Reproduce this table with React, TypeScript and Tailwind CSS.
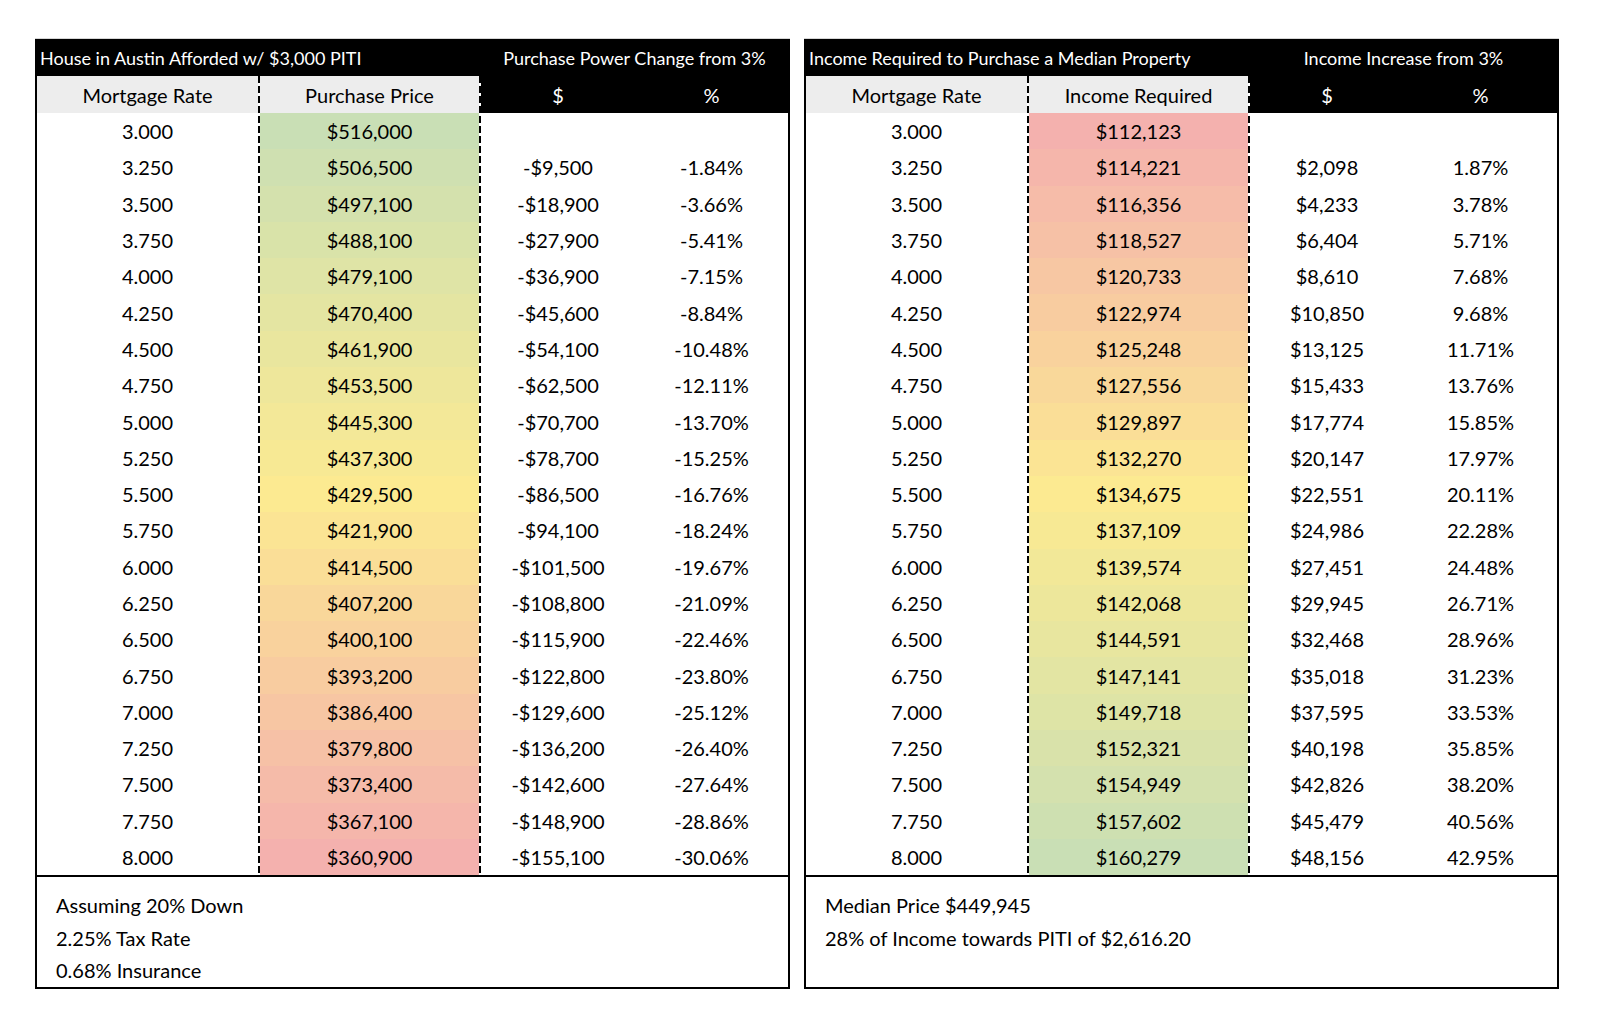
import React from "react";

type Row = [string, string, string];

interface PanelProps {
    title: string;
    subtitle: string;
    valueHeader: string;
    rows: Row[];
    notes: string[];
}

const RATES = [
    "3.000", "3.250", "3.500", "3.750", "4.000", "4.250", "4.500", "4.750", "5.000", "5.250", "5.500",
    "5.750", "6.000", "6.250", "6.500", "6.750", "7.000", "7.250", "7.500", "7.750", "8.000",
];

const purchase: Row[] = [
    ["$516,000", "", ""],
    ["$506,500", "-$9,500", "-1.84%"],
    ["$497,100", "-$18,900", "-3.66%"],
    ["$488,100", "-$27,900", "-5.41%"],
    ["$479,100", "-$36,900", "-7.15%"],
    ["$470,400", "-$45,600", "-8.84%"],
    ["$461,900", "-$54,100", "-10.48%"],
    ["$453,500", "-$62,500", "-12.11%"],
    ["$445,300", "-$70,700", "-13.70%"],
    ["$437,300", "-$78,700", "-15.25%"],
    ["$429,500", "-$86,500", "-16.76%"],
    ["$421,900", "-$94,100", "-18.24%"],
    ["$414,500", "-$101,500", "-19.67%"],
    ["$407,200", "-$108,800", "-21.09%"],
    ["$400,100", "-$115,900", "-22.46%"],
    ["$393,200", "-$122,800", "-23.80%"],
    ["$386,400", "-$129,600", "-25.12%"],
    ["$379,800", "-$136,200", "-26.40%"],
    ["$373,400", "-$142,600", "-27.64%"],
    ["$367,100", "-$148,900", "-28.86%"],
    ["$360,900", "-$155,100", "-30.06%"],
];

const income: Row[] = [
    ["$112,123", "", ""],
    ["$114,221", "$2,098", "1.87%"],
    ["$116,356", "$4,233", "3.78%"],
    ["$118,527", "$6,404", "5.71%"],
    ["$120,733", "$8,610", "7.68%"],
    ["$122,974", "$10,850", "9.68%"],
    ["$125,248", "$13,125", "11.71%"],
    ["$127,556", "$15,433", "13.76%"],
    ["$129,897", "$17,774", "15.85%"],
    ["$132,270", "$20,147", "17.97%"],
    ["$134,675", "$22,551", "20.11%"],
    ["$137,109", "$24,986", "22.28%"],
    ["$139,574", "$27,451", "24.48%"],
    ["$142,068", "$29,945", "26.71%"],
    ["$144,591", "$32,468", "28.96%"],
    ["$147,141", "$35,018", "31.23%"],
    ["$149,718", "$37,595", "33.53%"],
    ["$152,321", "$40,198", "35.85%"],
    ["$154,949", "$42,826", "38.20%"],
    ["$157,602", "$45,479", "40.56%"],
    ["$160,279", "$48,156", "42.95%"],
];

const GREEN = [201, 223, 181];
const YELLOW = [252, 234, 145];
const RED = [244, 177, 174];

function toNumber(s: string) {
    return Number(s.replace(/[$,]/g, ""));
}

function mix(a: number[], b: number[], t: number) {
    const c = a.map((v, i) => Math.round(v + (b[i] - v) * t));
    return `rgb(${c[0]}, ${c[1]}, ${c[2]})`;
}

// excel style 3-colour scale: lowest red, median yellow, highest green
function scaleColor(v: number, values: number[]) {
    const sorted = [...values].sort((a, b) => a - b);
    const min = sorted[0];
    const max = sorted[sorted.length - 1];
    const mid = sorted[Math.floor(sorted.length / 2)];
    if (v <= mid) return mix(RED, YELLOW, (v - min) / (mid - min));
    return mix(YELLOW, GREEN, (v - mid) / (max - mid));
}

function Dashes() {
    return <div className="w-[2px] self-stretch shrink-0 bg-[repeating-linear-gradient(to_bottom,#000_0px,#000_7px,transparent_7px,transparent_10px)]" />;
}

function Panel({ title, subtitle, valueHeader, rows, notes }: PanelProps) {
    const values = rows.map((r) => toNumber(r[0]));
    const cell = "h-[36.3px] flex items-center justify-center";

    return (
        <div className="border-t border-[#d6d6d6]">
            <div className="w-[755px] border-2 border-black flex flex-col text-[20px] text-black">
                <div className="h-[35px] bg-black text-white text-[18px] flex items-center">
                    <div className="w-[444px] pl-[3px] whitespace-nowrap">{title}</div>
                    <div className="flex-1 text-center whitespace-nowrap">{subtitle}</div>
                </div>

                <div className="flex">
                    <div className="w-[221px] flex flex-col">
                        <div className="h-[37px] bg-[#ededed] flex items-center justify-center">Mortgage Rate</div>
                        {RATES.map((rate) => (
                            <div key={rate} className={cell}>{rate}</div>
                        ))}
                    </div>

                    <div className="w-[223px] flex">
                        <Dashes />
                        <div className="flex-1 flex flex-col">
                            <div className="h-[37px] bg-[#ededed] flex items-center justify-center">{valueHeader}</div>
                            {rows.map((r, i) => (
                                <div key={i} className={cell} style={{ backgroundColor: scaleColor(values[i], values) }}>
                                    {r[0]}
                                </div>
                            ))}
                        </div>
                        <Dashes />
                    </div>

                    <div className="w-[154px] flex flex-col">
                        <div className="h-[37px] bg-black text-white flex items-center justify-center">$</div>
                        {rows.map((r, i) => (
                            <div key={i} className={cell}>{r[1]}</div>
                        ))}
                    </div>

                    <div className="flex-1 flex flex-col">
                        <div className="h-[37px] bg-black text-white flex items-center justify-center">%</div>
                        {rows.map((r, i) => (
                            <div key={i} className={cell}>{r[2]}</div>
                        ))}
                    </div>
                </div>

                <div className="border-t-2 border-black h-[112px] pt-[12px] pl-[19px] leading-[32.5px]">
                    {notes.map((n) => (
                        <div key={n}>{n}</div>
                    ))}
                </div>
            </div>
        </div>
    );
}

export default function App() {
    return (
        <div className="min-h-screen bg-white font-['Lato','Liberation_Sans',sans-serif]">
            <div className="pt-[38px] pl-[35px] flex gap-[14px]">
                <Panel
                    title="House in Austin Afforded w/ $3,000 PITI"
                    subtitle="Purchase Power Change from 3%"
                    valueHeader="Purchase Price"
                    rows={purchase}
                    notes={["Assuming 20% Down", "2.25% Tax Rate", "0.68% Insurance"]}
                />
                <Panel
                    title="Income Required to Purchase a Median Property"
                    subtitle="Income Increase from 3%"
                    valueHeader="Income Required"
                    rows={income}
                    notes={["Median Price $449,945", "28% of Income towards PITI of $2,616.20"]}
                />
            </div>
        </div>
    );
}
